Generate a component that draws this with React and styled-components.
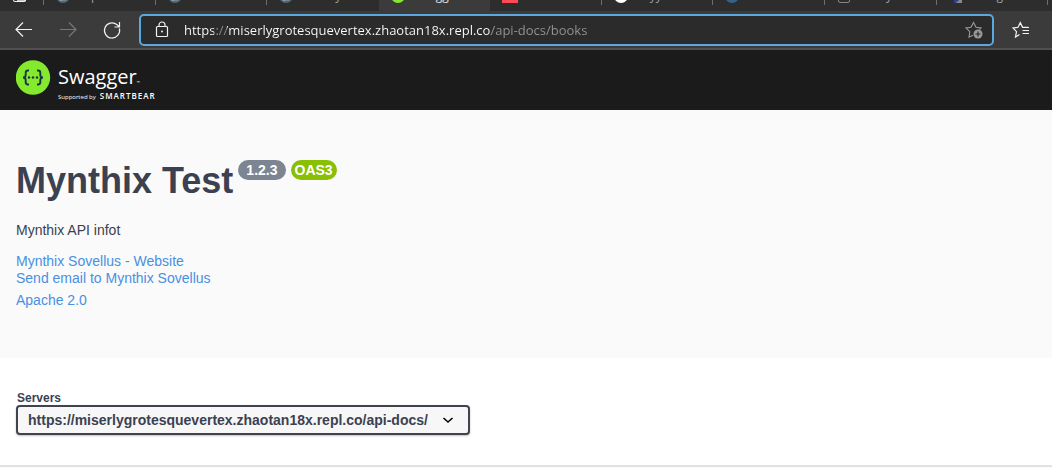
import React from "react";
import styled, { createGlobalStyle } from "styled-components";

const GlobalStyle = createGlobalStyle`
  *, *::before, *::after { box-sizing: border-box; }
  body {
    margin: 0;
    background: #fafafa;
    color: #3b4151;
    font-family: "Liberation Sans", Arial, sans-serif;
    font-size: 14px;
  }
`;

const Browser = styled.header`
  background: #3b3b3b;
  border-bottom: 2px solid #505050;
  font-family: "Open Sans", "Segoe UI", sans-serif;
`;

const TabStrip = styled.div`
  display: flex;
  height: 11px;
  padding-right: 4px;
  overflow: hidden;
  background: #2d2d2d;
  svg { display: block; flex: none; }
`;

const PinnedTab = styled.div`
  flex: 0 0 44px;
  height: 5px;
  padding-left: 13px;
  border-right: 1px solid #6e6e6e;
`;

const Tab = styled.div`
  flex: 1 1 0;
  min-width: 0;
  display: flex;
  align-items: flex-end;
  height: ${(p) => (p.$active ? 11 : 5)}px;
  padding-left: 12px;
  padding-bottom: ${(p) => (p.$active ? 6 : 0)}px;
  background: ${(p) => (p.$active ? "#3b3b3b" : "transparent")};
  border-right: 1px solid ${(p) => (p.$line ? "#6e6e6e" : "transparent")};
`;

const TabText = styled.span`
  margin-left: ${(p) => p.$gap}px;
  color: ${(p) => p.$color || "#a0a0a0"};
  font-size: 12px;
  line-height: 16px;
  height: 17px;
`;

const Toolbar = styled.div`
  display: flex;
  align-items: center;
  padding: 3px 21px 2px 14px;
`;

const IconButton = styled.button`
  display: flex;
  flex: none;
  padding: 0;
  border: 0;
  background: none;
  color: ${(p) => p.$color || "#f2f2f2"};
  margin-right: ${(p) => p.$gap || 0}px;
`;

const AddressBar = styled.div`
  flex: 1;
  display: flex;
  align-items: center;
  height: 32px;
  padding: 0 9px 0 12px;
  margin-right: 17px;
  border: 2px solid #5ba7e0;
  border-radius: 5px;
  background: #2b2b2b;
  color: #f2f2f2;
`;

const Address = styled.input`
  flex: 1;
  min-width: 0;
  height: 24px;
  margin-left: 13px;
  padding: 0;
  border: 0;
  outline: 0;
  color: #ffffff;
  font: 13px/24px "Open Sans", "Segoe UI", sans-serif;
  background: linear-gradient(
    90deg,
    #fff 30px, #8c8c8c 30px, #8c8c8c 43px,
    #fff 43px, #fff 307px, #959595 307px
  );
  background-clip: text;
  -webkit-background-clip: text;
  -webkit-text-fill-color: transparent;
`;

const Topbar = styled.div`
  display: flex;
  height: 60px;
  padding: 9px 16px;
  background: #1b1b1b;
`;

const LogoLink = styled.a`
  display: flex;
  gap: 7px;
  color: #fff;
  text-decoration: none;
  font-family: "Open Sans", sans-serif;
`;

const LogoWords = styled.span`
  display: flex;
  flex-direction: column;
  padding-top: 4px;
`;

const LogoName = styled.span`
  font-size: 20px;
  line-height: 28px;
`;

const Trademark = styled.small`
  font-size: 4px;
  line-height: 4px;
`;

const LogoTagline = styled.span`
  display: flex;
  align-items: baseline;
  gap: 4px;
  font-size: 6px;
  line-height: 10px;
`;

const Brand = styled.strong`
  font-size: 8px;
  font-weight: 600;
  letter-spacing: 1px;
`;

const Info = styled.section`
  padding: 50px 16px 49px;
  background: #fafafa;
`;

const Title = styled.h1`
  display: flex;
  align-items: flex-start;
  gap: 5px;
  margin: 0 0 20px;
  font-size: 36px;
  line-height: 42px;
`;

const Badge = styled.span`
  padding: 0 ${(p) => p.$pad}px;
  border-radius: 10px;
  background: ${(p) => p.$color};
  color: #fff;
  font-size: 14px;
  line-height: 20px;
`;

const Description = styled.p`
  margin: 0 0 15px;
  line-height: 16px;
`;

const Links = styled.div`
  display: flex;
  flex-direction: column;
  align-items: flex-start;
  margin-bottom: 5px;
  line-height: 17px;
`;

const Link = styled.a`
  color: #4990e2;
  line-height: 17px;
  text-decoration: none;
`;

const License = styled.div`
  line-height: 17px;
`;

const Servers = styled.section`
  padding: 33px 16px 30px;
  background: #fff;
  border-bottom: 2px solid #dfe1e3;
`;

const Label = styled.label`
  display: block;
  padding-left: 1px;
  font-size: 12px;
  font-weight: 700;
  line-height: 14px;
`;

const SelectWrap = styled.div`
  display: inline-grid;
  vertical-align: top;
  align-items: center;
  max-width: 100%;
  > * { grid-area: 1 / 1; }
  > svg { justify-self: end; margin-right: 16px; pointer-events: none; }
`;

const Select = styled.select`
  appearance: none;
  height: 30px;
  max-width: 100%;
  padding: 0 40px 0 10px;
  border: 2px solid #41444e;
  border-radius: 4px;
  background: #f7f7f7;
  box-shadow: 0 1px 2px rgba(0, 0, 0, 0.25);
  color: #3b4151;
  font: bold 14px "Liberation Sans", Arial, sans-serif;
`;

const Arrow = ({ forward }) => (
  <svg width="20" height="20" viewBox="0 0 20 20" fill="none" stroke="currentColor" strokeWidth="1.2">
    <path d={forward ? "M2 9.500h16M11 2.500l7 7-7 7" : "M18 9.500H2M9 2.500l-7 7 7 7"} />
  </svg>
);

const Reload = () => (
  <svg width="20" height="20" viewBox="0 0 20 20" fill="none" stroke="currentColor" strokeWidth="1.2">
    <path d="M17.4 8.5A7.6 7.6 0 1 1 14.8 4.5L17.5 7M17.5 2v5h-5" />
  </svg>
);

const Lock = () => (
  <svg width="18" height="20" viewBox="0 0 18 20" fill="none" stroke="currentColor" strokeWidth="1.2">
    <rect x="3.5" y="6.5" width="11" height="10" rx="1" />
    <path d="M6 6.500V5a3 3 0 0 1 6 0v1.500" />
    <circle cx="9" cy="11.500" r="1" fill="currentColor" stroke="none" />
  </svg>
);

const StarAdd = () => (
  <svg width="18" height="20" viewBox="0 0 18 20" fill="none">
    <path
      d="M8 15.200L4 17l.8-5.300L1 8l5-.8 2.500-4.700L11 7.200l5 .8-1.500 1.600"
      stroke="currentColor"
      strokeWidth="1.100"
    />
    <circle cx="13" cy="14" r="4.500" fill="currentColor" />
    <path d="M10.500 14h5M13 11.500v5" stroke="#2b2b2b" strokeWidth="1.200" />
  </svg>
);

const Favorites = () => (
  <svg width="20" height="20" viewBox="0 0 20 20" fill="none" stroke="currentColor" strokeWidth="1.200">
    <path d="M8.500 14.500L4.500 17l1-5.300L2 8l5-.7 2.300-4.600L11.600 7.300H17M11.500 10.500H18M11.500 13.500H18M12 7.500h6" />
  </svg>
);

const Favicon = ({ color, square }) => (
  <svg width="16" height="14" viewBox="0 0 16 14">
    {square ? (
      <rect width="16" height="12" fill={color} />
    ) : (
      <circle cx="7" cy="5" r="7" fill={color} />
    )}
  </svg>
);

const ReplFavicon = () => (
  <svg width="14" height="14" viewBox="0 0 14 14">
    <circle cx="7" cy="5" r="7" fill="#53656f" />
    <path d="M4 10Q6 8 10 9" fill="none" stroke="#8ca0a9" strokeWidth="1.500" />
  </svg>
);

const PageFavicon = () => (
  <svg width="14" height="14" viewBox="0 0 14 14" fill="none" stroke="#858585">
    <rect x="1.500" y="-3" width="11" height="14.500" rx="1.500" />
  </svg>
);

const BlueFavicon = () => (
  <svg width="14" height="14" viewBox="0 0 14 14">
    <path d="M5 8h8v4H5z" fill="#888" />
    <path d="M5 8h6l-4 4H5z" fill="#35408a" />
  </svg>
);

const PinnedIcon = () => (
  <svg width="14" height="5" viewBox="0 0 14 5" fill="none" stroke="#f2f2f2" strokeWidth="1.200">
    <path d="M.6 0Q.6 1.500 2 1.500h9q1.500 0 1.500-1.500M4 .2h9" />
  </svg>
);

const SwaggerMark = () => (
  <svg width="35" height="36" viewBox="0 0 35 36" fill="none">
    <circle cx="17" cy="18.500" r="17.200" fill="#85ea2d" />
    <path
      d="M13 11.500h-1q-2.300 0-2.300 2.200v2.300q0 2.500-2.700 2.500 2.700 0 2.700 2.500v2.300q0 2.200 2.300 2.200h1M21 11.500h1q2.300 0 2.300 2.200v2.300q0 2.500 2.700 2.500-2.700 0-2.700 2.500v2.300q0 2.200-2.300 2.200h-1"
      stroke="#173647"
      strokeWidth="1.900"
    />
    <g fill="#173647">
      <circle cx="13" cy="18.500" r="1.200" />
      <circle cx="17" cy="18.500" r="1.200" />
      <circle cx="21" cy="18.500" r="1.200" />
    </g>
  </svg>
);

const Chevron = () => (
  <svg width="12" height="8" viewBox="0 0 12 8" fill="none" stroke="#000" strokeWidth="1.600">
    <path d="M1.500 2l4.500 4L10.500 2" />
  </svg>
);

export default function App() {
  return (
    <>
      <GlobalStyle />
      <Browser>
        <TabStrip>
          <PinnedTab><PinnedIcon /></PinnedTab>
          <Tab $line><ReplFavicon /><TabText $gap={21}>p</TabText></Tab>
          <Tab $line><ReplFavicon /></Tab>
          <Tab><ReplFavicon /><TabText $gap={42}>y</TabText></Tab>
          <Tab $active><Favicon color="#85ea2d" /><TabText $gap={29} $color="#e0e0e0">gg</TabText></Tab>
          <Tab $line><Favicon square color="#ff4b55" /></Tab>
          <Tab $line><Favicon color="#fff" /><TabText $gap={20}>yy</TabText></Tab>
          <Tab $line><Favicon color="#356289" /></Tab>
          <Tab $line><PageFavicon /><TabText $gap={35}>y</TabText></Tab>
          <Tab $line><BlueFavicon /><TabText $gap={34}>g</TabText></Tab>
        </TabStrip>
        <Toolbar>
          <IconButton aria-label="Back" $gap={24}><Arrow /></IconButton>
          <IconButton aria-label="Forward" $gap={24} $color="#777" disabled><Arrow forward /></IconButton>
          <IconButton aria-label="Reload" $gap={17}><Reload /></IconButton>
          <AddressBar>
            <Lock />
            <Address
              aria-label="Address"
              defaultValue="https://miserlygrotesquevertex.zhaotan18x.repl.co/api-docs/books"
            />
            <IconButton aria-label="Add to favorites" $color="#999"><StarAdd /></IconButton>
          </AddressBar>
          <IconButton aria-label="Favorites"><Favorites /></IconButton>
        </Toolbar>
      </Browser>

      <Topbar>
        <LogoLink href="#">
          <SwaggerMark />
          <LogoWords>
            <LogoName>Swagger<Trademark>™</Trademark></LogoName>
            <LogoTagline>Supported by <Brand>SMARTBEAR</Brand></LogoTagline>
          </LogoWords>
        </LogoLink>
      </Topbar>

      <main>
        <Info>
          <Title>
            Mynthix Test
            <Badge $color="#7d8492" $pad={8}>1.2.3</Badge>
            <Badge $color="#89bf04" $pad={4}>OAS3</Badge>
          </Title>
          <Description>Mynthix API infot</Description>
          <Links>
            <Link href="#website">Mynthix Sovellus - Website</Link>
            <Link href="#email">Send email to Mynthix Sovellus</Link>
          </Links>
          <License><Link href="#license">Apache 2.0</Link></License>
        </Info>
        <Servers>
          <Label htmlFor="servers">Servers</Label>
          <SelectWrap>
            <Select id="servers">
              <option>https://miserlygrotesquevertex.zhaotan18x.repl.co/api-docs/</option>
            </Select>
            <Chevron />
          </SelectWrap>
        </Servers>
      </main>
    </>
  );
}
